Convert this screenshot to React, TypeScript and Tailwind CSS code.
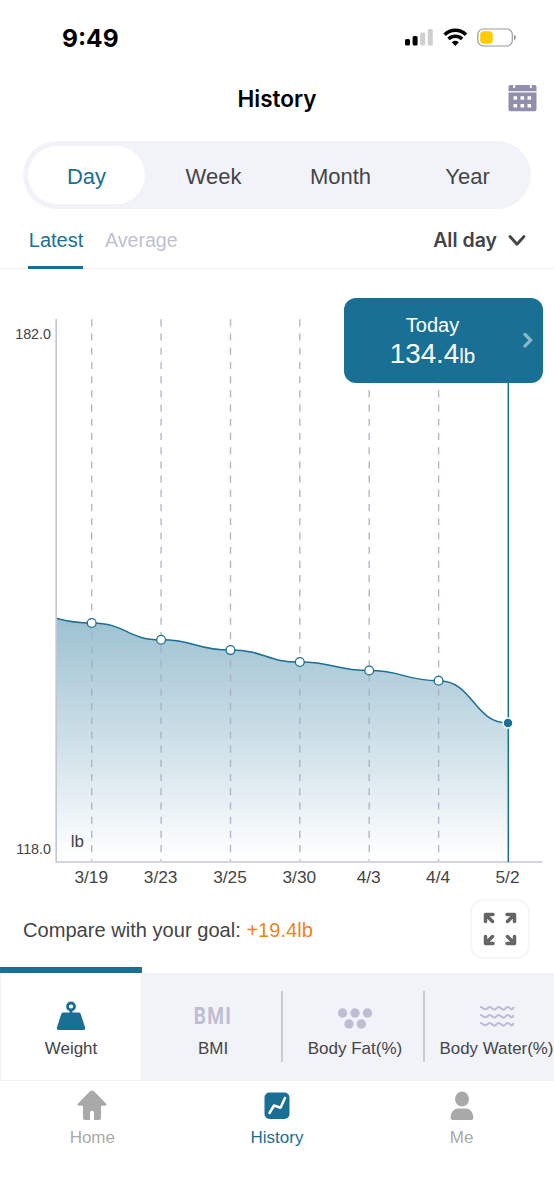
import React from "react";

const readings = [
  { label: "3/19", x: 91.7, y: 623 },
  { label: "3/23", x: 161.1, y: 639.8 },
  { label: "3/25", x: 230.5, y: 650.1 },
  { label: "3/30", x: 299.8, y: 662 },
  { label: "4/3", x: 369.2, y: 670.5 },
  { label: "4/4", x: 438.6, y: 680.7 },
  { label: "5/2", x: 508, y: 723 },
];

const curve = readings.slice(1).reduce((path, point, i) => {
  const mid = (readings[i].x + point.x) / 2;
  return `${path} C${mid},${readings[i].y} ${mid},${point.y} ${point.x},${point.y}`;
}, "M57,618.5 C68,621.5 78,623 91.7,623");

function StatusBar() {
  return (
    <div className="flex h-[74px] items-center justify-between pr-[37px] pl-[62px]">
      <span className="mt-[2px] font-['Inter'] text-[24.5px] leading-none font-bold text-black">9:49</span>
      <svg width="113" height="20" viewBox="0 0 113 20" className="mt-px">
        <rect x="1" y="11" width="5" height="6.5" rx="1.5" fill="#000" />
        <rect x="8.6" y="8" width="5" height="9.5" rx="1.5" fill="#000" />
        <rect x="16.2" y="4.5" width="5" height="13" rx="1.5" fill="#cfcfcf" />
        <rect x="23.8" y="1" width="5" height="16.5" rx="1.5" fill="#cfcfcf" />
        <g fill="none" stroke="#000" strokeWidth="3.5">
          <path d="M40.6 6.700a15.200 15.200 0 0 1 21.400 0" />
          <path d="M44.500 11.100a9.700 9.700 0 0 1 13.600 0" />
        </g>
        <path d="M47.8 14.300a5.400 5.400 0 0 1 7 0L51.300 18Z" fill="#000" />
        <rect x="73.800" y="1" width="34.500" height="17" rx="5.500" fill="#fff" stroke="#999" strokeWidth="1.200" />
        <rect x="76.200" y="3.200" width="12.500" height="12.600" rx="3.500" fill="#fc0" />
        <path d="M110 7c2.400.7 2.400 4.300 0 5Z" fill="#888" />
      </svg>
    </div>
  );
}

function CalendarIcon() {
  return (
    <svg width="29" height="28" viewBox="0 0 29 28" fill="#918fad">
      <path d="M2.500 1H5.200V3.300a1 1 0 0 0 2 0V1h14.600v2.300a1 1 0 0 0 2 0V1h2.700a2 2 0 0 1 2 2v4.300H.5V3a2 2 0 0 1 2-2Z" />
      <path fillRule="evenodd" d="M.5 8.600h28v16.700a2 2 0 0 1-2 2h-24a2 2 0 0 1-2-2ZM5.500 12.200h3.600v3.600H5.500ZM12.500 12.200h3.600v3.600h-3.600ZM19.500 12.200h3.600v3.600h-3.600ZM5.500 20h3.600v3.600H5.500ZM12.500 20h3.600v3.600h-3.600ZM19.500 20h3.600v3.600h-3.600Z" />
    </svg>
  );
}

function Header() {
  return (
    <header className="grid h-[67px] grid-cols-[1fr_auto_1fr] items-start">
      <span />
      <h1 className="pt-[13px] font-['Inter'] text-[22.5px] leading-[24px] font-semibold text-black">History</h1>
      <div className="flex justify-end pt-[10px] pr-[17px]">
        <CalendarIcon />
      </div>
    </header>
  );
}

function Periods() {
  return (
    <div className="mx-[23px] flex h-[68px] items-center rounded-full bg-[#f2f3f9] text-[22px] leading-none text-[#444448]">
      <div className="flex w-[127px] pl-[5px]">
        <div className="flex h-[58px] w-[117px] items-center justify-center rounded-full bg-white pt-[3px] text-[#1a6f94]">Day</div>
      </div>
      <div className="w-[127px] pt-[3px] text-center">Week</div>
      <div className="w-[127px] pt-[3px] text-center">Month</div>
      <div className="w-[127px] pt-[3px] text-center">Year</div>
    </div>
  );
}

function Filters() {
  return (
    <div className="flex h-[60px] border-b border-[#f1f1f3] pr-[28px] pl-[28px] text-[20px] leading-none">
      <div className="flex h-[60px] w-[55px] justify-center border-b-[3px] border-[#1a6f94] pt-[21px] pl-[1px] text-[#1a6f94]">Latest</div>
      <div className="ml-[22px] pt-[22px] text-[19.600px] text-[#bfbfd2]">Average</div>
      <div className="ml-auto flex pt-[22px] font-['Inter'] text-[19.500px] font-semibold text-[#444]">
        <span>All day</span>
        <svg width="18" height="13" viewBox="0 0 18 13" className="mt-[3px] ml-[11px]" fill="none" stroke="#444" strokeWidth="2.800" strokeLinecap="round" strokeLinejoin="round">
          <path d="M2 2.500 9 10.300 16 2.500" />
        </svg>
      </div>
    </div>
  );
}

function Chart() {
  return (
    <section className="relative h-[621px]">
      <svg width="554" height="621" viewBox="0 269 554 621" className="block">
        <defs>
          <linearGradient id="fill" x1="0" y1="618" x2="0" y2="858" gradientUnits="userSpaceOnUse">
            <stop offset="0" stopColor="#1a6f94" stopOpacity="0.430" />
            <stop offset="0.550" stopColor="#1a6f94" stopOpacity="0.200" />
            <stop offset="1" stopColor="#1a6f94" stopOpacity="0" />
          </linearGradient>
        </defs>
        <path d={`${curve} V861 H57Z`} fill="url(#fill)" />
        {readings.slice(0, -1).map((r) => (
          <path key={r.label} d={`M${r.x} 319.300V861`} stroke="#a9a9c4" strokeOpacity="0.850" strokeWidth="1.400" strokeDasharray="7.100 7.110" />
        ))}
        <path d="M56.200 319V862H542.500" fill="none" stroke="#c5c5d8" strokeWidth="1.600" />
        <path d="M508.300 380V862" stroke="#1a6f94" strokeWidth="1.500" />
        <path d={curve} fill="none" stroke="#1a6f94" strokeWidth="1.500" />
        {readings.slice(0, -1).map((r) => (
          <circle key={r.label} cx={r.x} cy={r.y} r="4.400" fill="#fff" stroke="#1a6f94" strokeWidth="1.300" />
        ))}
        <circle cx="508" cy="723" r="5" fill="#1a6f94" stroke="#fff" strokeWidth="1.500" />
        <g fill="#444">
          <text x="51" y="339" fontSize="14.300" textAnchor="end">182.0</text>
          <text x="51" y="853.500" fontSize="14.300" textAnchor="end">118.0</text>
          <text x="70.700" y="847" fontSize="17">lb</text>
          {readings.map((r) => (
            <text key={r.label} x={r.x - 0.500} y="882.500" fontSize="17.300" textAnchor="middle">{r.label}</text>
          ))}
        </g>
      </svg>
      <div className="absolute top-[29px] left-[344px] flex h-[85px] w-[199px] flex-col items-center rounded-[12px] bg-[#1a6f94] pr-[22px] text-white">
        <span className="mt-[17px] text-[20px] leading-[20px]">Today</span>
        <span className="mt-[4px] text-[27.800px] leading-[29px]">134.4<span className="text-[20.500px]">lb</span></span>
        <svg width="10" height="16" viewBox="0 0 10 16" className="absolute top-[34px] right-[10px]" fill="none" stroke="#8bb7ca" strokeWidth="3.200" strokeLinejoin="round" strokeLinecap="round">
          <path d="M2 2.500 7.700 8.200 2 14" />
        </svg>
      </div>
    </section>
  );
}

function Goal() {
  return (
    <div className="flex h-[77px] justify-between pr-[24px] pl-[23px]">
      <p className="pt-[29px] text-[20.100px] leading-[22px] whitespace-nowrap text-[#444]">
        Compare with your goal: <span className="text-[#eb8519]">+19.4lb</span>
      </p>
      <div className="mt-[9px] flex h-[60px] w-[60px] items-center justify-center rounded-[13px] border-2 border-[#f6f6f7] bg-white">
        <svg width="34" height="34" viewBox="0 0 34 34" fill="none" stroke="#656565" strokeWidth="3.500" strokeLinecap="round" strokeLinejoin="round">
          <path d="M2.500 9.500V2.500H10M3 3 9.500 9.500M24 2.500h7.500V9.500M31 3l-6.500 6.500M2.500 24.500v7H10M3 31l6.500-6.500M24 31.500h7.500V24.500M31 31l-6.500-6.500" />
        </svg>
      </div>
    </div>
  );
}

function Metrics() {
  return (
    <div className="flex h-[114px] overflow-hidden text-[17px] leading-[20px] text-[#444448]">
      <div className="h-[114px] w-[142px] shrink-0 border-t-[6px] border-[#1a6f94]">
        <div className="flex h-[108px] flex-col items-center border-r border-b border-l border-[#f2f3f9] bg-white pt-[28px]">
          <svg width="30" height="31" viewBox="0 0 30 31" fill="#1a6f94">
            <circle cx="15" cy="5.500" r="3.500" fill="none" stroke="#1a6f94" strokeWidth="2.800" />
            <path d="M13.600 9h2.800v4h-2.800ZM7.200 11.500h15.600a2 2 0 0 1 1.900 1.400l4.400 13.600a2 2 0 0 1-1.900 2.500H2.800A2 2 0 0 1 .9 26.500l4.400-13.600A2 2 0 0 1 7.200 11.500Z" />
          </svg>
          <span className="mt-[7px]">Weight</span>
        </div>
      </div>
      <div className="mt-[6px] flex grow bg-[#f2f3f9]">
        <div className="flex w-[142px] shrink-0 flex-col items-center pt-[33px]">
          <span className="scale-x-[0.830] pl-[1px] font-['Roboto'] text-[23px] leading-[22px] font-bold tracking-[1.500px] text-[#bdbed3]">BMI</span>
          <span className="mt-[11px]">BMI</span>
        </div>
        <div className="relative -ml-[3px] flex w-[142px] shrink-0 flex-col items-center pt-[34px] pl-[6px] before:absolute before:top-[18px] before:left-0 before:h-[71px] before:w-[2px] before:bg-[#cacbd9]">
          <svg width="36" height="22" viewBox="0 0 36 22" fill="#bdbed3">
            <circle cx="5.500" cy="6" r="4.700" /><circle cx="18" cy="6" r="4.700" /><circle cx="30.500" cy="6" r="4.700" />
            <circle cx="12" cy="17" r="4.700" /><circle cx="24.300" cy="17" r="4.700" />
          </svg>
          <span className="mt-[10px]">Body Fat(%)</span>
        </div>
        <div className="relative flex w-[147px] shrink-0 flex-col items-center pt-[31px] before:absolute before:top-[18px] before:left-0 before:h-[71px] before:w-[2px] before:bg-[#cacbd9]">
          <svg width="36" height="24" viewBox="0 0 36 24" fill="none" stroke="#bdbed3" strokeWidth="2.200">
            {[3, 11, 19].map((y) => (
              <path key={y} d={`M1 ${y}q2 0 3.500 1.500t4-.2q2-2.600 4.500 0t4.500 0q2-2.600 4.500 0t4.500 0q2-2.600 4.500 0t3.500-1.300`} />
            ))}
          </svg>
          <span className="mt-[11px] text-[16.900px] whitespace-nowrap">Body Water(%)</span>
        </div>
      </div>
    </div>
  );
}

function BottomNav() {
  return (
    <nav className="grid h-[118px] grid-cols-3 pt-[9px] text-[17px] leading-[20px] text-[#aaa]">
      <div className="flex flex-col items-center">
        <svg width="30" height="31" viewBox="0 0 30 31" fill="#a9a9a9">
          <path d="M13 1.300a3 3 0 0 1 4 0L29 13.500c1 1.200.3 2.200-1 2.200H24V28a2 2 0 0 1-2 2h-5v-7.200a2 2 0 0 0-4 0V30H8a2 2 0 0 1-2-2V15.700H2c-1.300 0-2-1-1-2.200Z" />
        </svg>
        <span className="mt-[7px]">Home</span>
      </div>
      <div className="flex flex-col items-center text-[#1a6f94]">
        <svg width="26" height="31" viewBox="0 0 26 31">
          <rect x=".500" y="2.500" width="25" height="26.500" rx="5" fill="#1a6f94" />
          <path d="M5.500 23 10 15.500l6.500 2.300L21 8" fill="none" stroke="#fff" strokeWidth="2.500" strokeLinecap="round" strokeLinejoin="round" />
        </svg>
        <span className="mt-[7px]">History</span>
      </div>
      <div className="flex flex-col items-center">
        <svg width="24" height="31" viewBox="0 0 24 31" fill="#a9a9a9">
          <ellipse cx="12" cy="9" rx="7" ry="7.500" />
          <path d="M8 18.500h8c4.500 0 7.200 4.500 7.400 9 .1 1.700-.8 2.500-2.400 2.500H3C1.400 30 .5 29.200.6 27.500.8 23 3.500 18.500 8 18.500Z" />
        </svg>
        <span className="mt-[7px]">Me</span>
      </div>
    </nav>
  );
}

export default function App() {
  return (
    <main className="h-[1199px] w-[554px] overflow-hidden bg-white font-['Liberation_Sans',sans-serif]">
      <StatusBar />
      <Header />
      <Periods />
      <Filters />
      <Chart />
      <Goal />
      <Metrics />
      <BottomNav />
    </main>
  );
}
